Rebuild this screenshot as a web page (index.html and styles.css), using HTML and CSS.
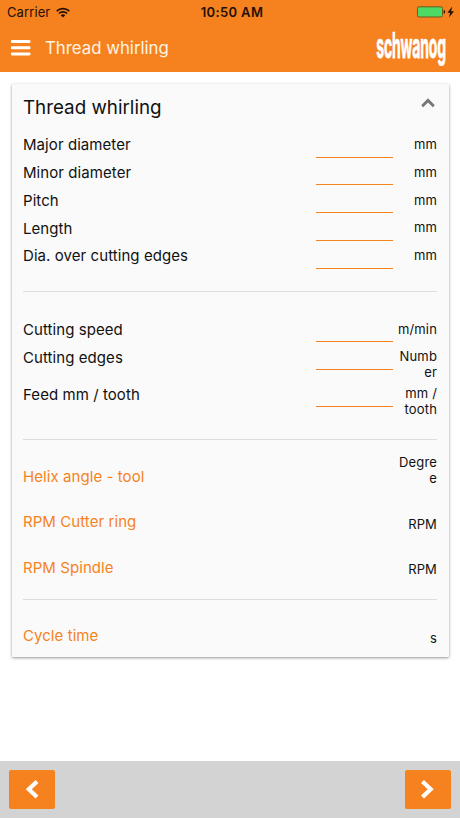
FILE: index.html
```html
<!DOCTYPE html>
<html lang="en">
<head>
<meta charset="utf-8">
<title>Thread whirling</title>
<link rel="stylesheet" href="styles.css">
</head>
<body>
<header class="header">
  <div class="status">
    <div class="carrier"><span>Carrier</span>
      <svg width="14" height="11" viewBox="0 0 14 11" fill="none" stroke="#241006" stroke-width="1.7"><path d="M.7 4.1a9 9 0 0 1 12.6 0M2.9 6.5a5.9 5.9 0 0 1 8.2 0"/><path d="M7 10.6 4.7 8.3a3.3 3.3 0 0 1 4.6 0Z" fill="#241006" stroke="none"/></svg>
    </div>
    <time class="clock">10:50 AM</time>
    <svg class="battery" width="38" height="12" viewBox="0 0 38 12"><rect x=".5" y=".8" width="25" height="10.2" rx="1.5" fill="#4cd964" stroke="#76561a"/><path d="M26.7 4q1.5.3 1.5 1.9t-1.5 1.9Z" fill="#241006"/><path d="m35.2.4-4.8 6.3h2.7l-1 4.9 4.8-6.4h-2.8Z" fill="#241006"/></svg>
  </div>
  <div class="toolbar">
    <svg width="20" height="18" viewBox="0 0 20 18" fill="#fff"><rect y="1" width="19.4" height="3" rx=".8"/><rect y="7.2" width="19.4" height="3" rx=".8"/><rect y="13.4" width="19.4" height="3" rx=".8"/></svg>
    <h1 class="page-title">Thread whirling</h1>
    <span class="logo">schwanog</span>
  </div>
</header>
<main class="content">
  <section class="card">
    <div class="card-head"><h2 class="card-title">Thread whirling</h2>
      <svg width="14" height="10" viewBox="0 0 14 10" fill="none" stroke="#777" stroke-width="2.9"><path d="m1.2 8.2 5.8-5.8 5.8 5.8"/></svg>
    </div>
    <div class="group">
      <div class="row"><span class="label">Major diameter</span><span class="field"></span><span class="unit">mm</span></div>
      <div class="row"><span class="label">Minor diameter</span><span class="field"></span><span class="unit">mm</span></div>
      <div class="row"><span class="label">Pitch</span><span class="field"></span><span class="unit">mm</span></div>
      <div class="row"><span class="label">Length</span><span class="field"></span><span class="unit">mm</span></div>
      <div class="row"><span class="label">Dia. over cutting edges</span><span class="field"></span><span class="unit">mm</span></div>
    </div>
    <hr class="divider">
    <div class="group">
      <div class="row"><span class="label">Cutting speed</span><span class="field"></span><span class="unit">m/min</span></div>
      <div class="row"><span class="label">Cutting edges</span><span class="field"></span><span class="unit">Number</span></div>
      <div class="row"><span class="label">Feed mm / tooth</span><span class="field"></span><span class="unit">mm / tooth</span></div>
    </div>
    <hr class="divider divider-results">
    <div class="group">
      <div class="row result"><span class="label">Helix angle - tool</span><span></span><span class="unit">Degree</span></div>
      <div class="row result"><span class="label">RPM Cutter ring</span><span></span><span class="unit">RPM</span></div>
      <div class="row result"><span class="label">RPM Spindle</span><span></span><span class="unit">RPM</span></div>
    </div>
    <hr class="divider divider-results">
    <div class="row result"><span class="label">Cycle time</span><span></span><span class="unit">s</span></div>
  </section>
</main>
<footer class="footer">
  <button class="nav" aria-label="Previous"><svg width="14" height="20" viewBox="0 0 14 20"><path d="m12 1.5-8.2 7.8 8.2 7.8"/></svg></button>
  <button class="nav" aria-label="Next"><svg width="14" height="20" viewBox="0 0 14 20"><path d="m1.5 1.5 8.2 7.8-8.2 7.8"/></svg></button>
</footer>
</body>
</html>
```
FILE: styles.css
```css
* { box-sizing: border-box; }
body {
  margin: 0;
  height: 818px;
  display: flex;
  flex-direction: column;
  background: #fff;
  color: #111;
  font-family: Inter, "Liberation Sans", sans-serif;
}
h1, h2 { margin: 0; font-weight: 400; }
.header { height: 71.5px; background: #f6821f; }
.status {
  height: 24px;
  padding: 0 6px 0 10px;
  display: grid;
  grid-template-columns: 1fr auto 1fr;
  align-items: center;
  color: #241006;
  font-size: 13px;
}
.carrier { margin-left: -3px; display: flex; align-items: center; gap: 6px; letter-spacing: .1px; }
.clock { font-weight: 600; letter-spacing: .35px; }
.battery { justify-self: end; margin-right: -1px; }
.toolbar { height: 47px; padding: 0 14px 0 11px; display: flex; align-items: center; }
.page-title { margin-left: 14px; color: #fff4e4; font-size: 16.8px; }
.logo {
  margin: 0 0 5px auto;
  color: #fff;
  font-size: 14px;
  font-weight: 700;
  line-height: 16px;
  letter-spacing: -.15px;
  -webkit-text-stroke: .3px #fff;
  transform: scaleY(2.5);
}
.content { flex: 1; padding: 12px 11px 0 12px; }
.card {
  height: 573px;
  padding: 0 12px 0 11px;
  background: #fafafa;
  border-radius: 1px;
  box-shadow: 0 1px 3px rgba(0, 0, 0, .42);
}
.card-head {
  height: 47.5px;
  padding: 0 2px 0 0;
  display: flex;
  align-items: center;
  justify-content: space-between;
}
.card-head svg { margin-bottom: 9px; }
.card-title { font-size: 18.8px; }
.row { display: grid; grid-template-columns: 293px 77px 44px; min-height: 27.8px; }
.label { padding-top: 4.2px; font-size: 15px; line-height: 20px; letter-spacing: .07px; }
.field { height: 26.5px; border-bottom: 1.5px solid #f6821f; }
.unit {
  width: 40px;
  justify-self: end;
  padding-top: 5px;
  font-size: 13px;
  line-height: 16px;
  letter-spacing: .15px;
  text-align: right;
  overflow-wrap: anywhere;
}
.divider { height: 1px; margin: 21px 0 23.7px; border: 0; background: #ddd; }
.divider-results { margin-bottom: 0; }
.result { height: 45.7px; padding-top: 1px; align-items: end; }
.result .label { color: #f6821f; position: relative; top: 1px; }
.result .unit { position: relative; top: .3px; }
.group + .divider-results { margin-top: 21.6px; }
.footer {
  height: 57px;
  padding: 0 9px;
  display: flex;
  align-items: center;
  justify-content: space-between;
  background: #d3d3d3;
}
.nav {
  width: 46px;
  height: 39px;
  padding: 0;
  display: grid;
  place-items: center;
  border: 0;
  border-radius: 2px;
  background: #f6821f;
}
.nav path { fill: none; stroke: #fff; stroke-width: 4.2; }
```
